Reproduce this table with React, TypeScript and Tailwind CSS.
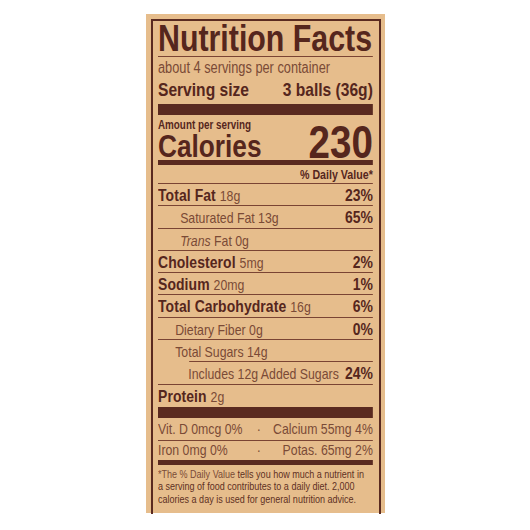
const rows = [
  { label: "Total Fat", amount: "18g", dv: "23%", bold: true, indent: "" },
  { label: "Saturated Fat", amount: "13g", dv: "65%", bold: false, indent: "pl-[27px]" },
  { label: "Trans", amount: "Fat 0g", dv: "", bold: false, indent: "pl-[27px]", italic: true },
  { label: "Cholesterol", amount: "5mg", dv: "2%", bold: true, indent: "" },
  { label: "Sodium", amount: "20mg", dv: "1%", bold: true, indent: "" },
  { label: "Total Carbohydrate", amount: "16g", dv: "6%", bold: true, indent: "" },
  { label: "Dietary Fiber", amount: "0g", dv: "0%", bold: false, indent: "pl-[21px]" },
  { label: "Total Sugars", amount: "14g", dv: "", bold: false, indent: "pl-[21px]", shortLine: true },
  { label: "Includes 12g Added Sugars", amount: "", dv: "24%", bold: false, indent: "pl-[37px]" },
];

function Row({ r }: { r: (typeof rows)[number] }) {
  return (
    <div className="h-[22.3px]">
      <div className={`flex h-[21.3px] items-start justify-between whitespace-nowrap leading-[23px] ${r.indent}`}>
        <span>
          {r.italic ? (
            <span className="text-[15px] italic text-[#7a4a36]">{r.label} </span>
          ) : r.bold ? (
            <span className="text-[17px] font-bold tracking-[0.1px]">{r.label} </span>
          ) : (
            <span className="text-[15px] text-[#7a4a36]">{r.label} </span>
          )}
          <span className="text-[15px] text-[#7a4a36]">{r.amount}</span>
        </span>
        <span className="text-[17px] font-bold">{r.dv}</span>
      </div>
      <div className={`h-px bg-[#7a4433] ${r.shortLine ? "ml-[38px]" : ""}`} />
    </div>
  );
}

export default function App() {
  return (
    <div className="flex h-[530px] w-[530px] justify-center bg-white pt-[14px]">
      <div className="h-[499px] w-[239px] bg-[#e6bd8c] pl-[5px] pr-[4px] pt-[5px]">
        <div className="h-[495px] border-2 border-b-0 border-[#5a2a20] pl-[5px] pr-[6px]">
          {/* type is set in Liberation Sans, then squeezed to read like a condensed face */}
          <div className="w-[262px] origin-left scale-x-[0.82] font-[family-name:'Liberation_Sans',Arial,sans-serif] text-[16px] text-[#55261d]">
            <div className="h-[36px] whitespace-nowrap border-b border-[#7a4433] text-[37px] font-bold leading-[36px]">
              Nutrition Facts
            </div>
            <div className="h-[21px] whitespace-nowrap pt-[1px] text-[15.6px] leading-[20px] text-[#7a4a36]">
              about 4 servings per container
            </div>
            <div className="flex h-[26px] justify-between whitespace-nowrap text-[19px] font-bold leading-[24px]">
              <span>Serving size</span>
              <span>3 balls (36g)</span>
            </div>
            <div className="h-[11px] bg-[#5a2a20]" />
            <div className="flex items-end justify-between whitespace-nowrap pt-[4px]">
              <div className="font-bold">
                <div className="text-[12px] leading-[13px]">Amount per serving</div>
                <div className="text-[32px] leading-[28px]">Calories</div>
              </div>
              <div className="text-[47px] font-bold leading-[36px]">230</div>
            </div>
            <div className="h-[5px] bg-[#5a2a20]" />
            <div className="h-[19px] border-b border-[#7a4433] text-right text-[13px] font-bold leading-[19px]">
              % Daily Value*
            </div>
            {rows.map((r) => (
              <Row key={r.label} r={r} />
            ))}
            <div className="h-[22px] leading-[23px]">
              <span className="text-[17px] font-bold tracking-[0.1px]">Protein </span>
              <span className="text-[15px] text-[#7a4a36]">2g</span>
            </div>
            <div className="h-[11px] bg-[#5a2a20]" />
            <div className="grid h-[23px] grid-cols-[116px_14px_1fr] whitespace-nowrap border-b border-[#7a4433] text-[15px] leading-[22px] text-[#7a4a36]">
              <span>Vit. D 0mcg 0%</span>
              <span className="text-center">·</span>
              <span className="text-right">Calcium 55mg 4%</span>
            </div>
            <div className="grid h-[18px] grid-cols-[116px_14px_1fr] whitespace-nowrap text-[15px] leading-[18px] text-[#7a4a36]">
              <span>Iron 0mg 0%</span>
              <span className="text-center">·</span>
              <span className="text-right">Potas. 65mg 2%</span>
            </div>
            <div className="mt-[1px] h-[5px] bg-[#5a2a20]" />
            <p className="whitespace-nowrap pt-[3px] text-[11px] leading-[12.5px] text-[#7a4a36]">
              *The % Daily Value <span className="text-[#5e3023]">tells you how much a nutrient in</span>
              <br />
              <span className="text-[#5e3023]">a serving of food contributes to a daily diet. 2,000</span>
              <br />
              <span className="text-[#5e3023]">calories a day is used for general nutrition advice.</span>
            </p>
          </div>
        </div>
      </div>
    </div>
  );
}
